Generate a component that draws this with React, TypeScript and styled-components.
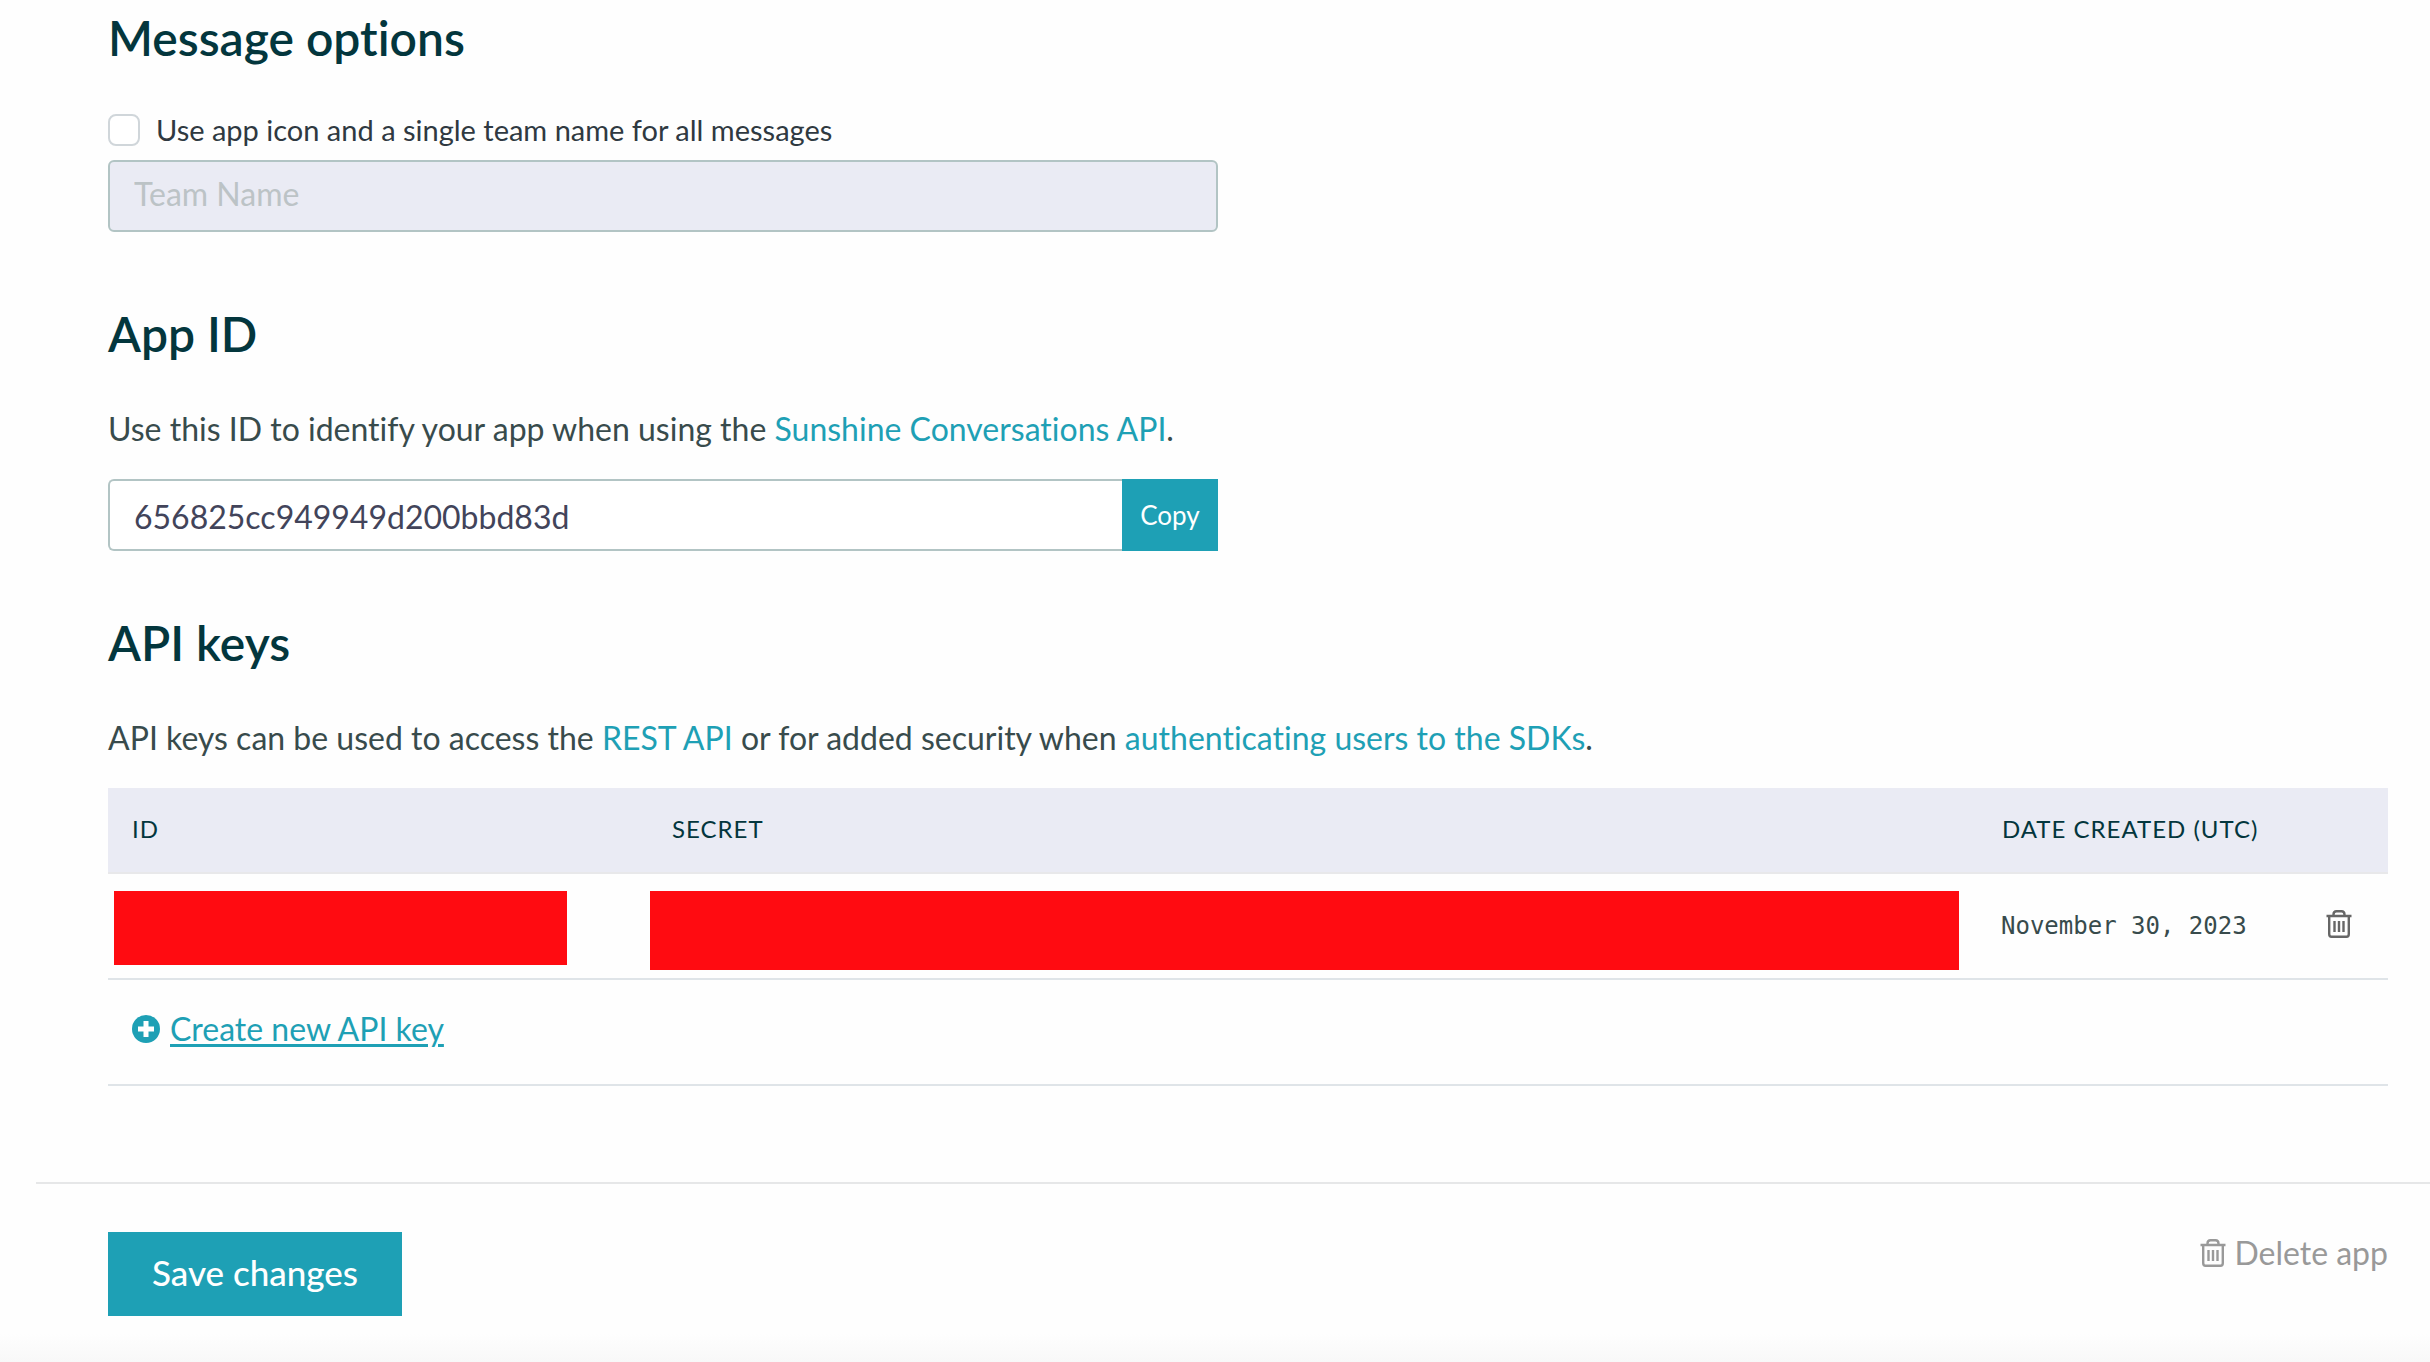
import React from 'react';
import styled, { createGlobalStyle } from 'styled-components';

const ink = '#03363d';
const body = '#384b4c';
const teal = '#1ea0b5';
const panel = '#eaebf4';
const outline = '#b2c4c4';
const rule = '#dfe4e8';
const redaction = '#ff0b11';
const sans = "Lato, 'Open Sans', sans-serif";

const GlobalStyle = createGlobalStyle`
  *, *::before, *::after { box-sizing: border-box; }
  body {
    margin: 0;
    background: #fefefe;
    color: ${body};
    font: 400 32px/42px ${sans};
    font-variant-ligatures: none;
  }
  button, input { font: inherit; }
`;

const Page = styled.div`
  display: flex;
  flex-direction: column;
  min-height: 100vh;
`;

const Settings = styled.main`
  padding: 6px 42px 96px 108px;
`;

const Section = styled.section<{ $top?: number }>`
  margin-top: ${p => p.$top ?? 0}px;
`;

const Heading = styled.h2`
  margin: 0 0 42px;
  color: ${ink};
  font-size: 48px;
  line-height: 64px;
  font-weight: 600;
`;

const CheckLabel = styled.label`
  display: flex;
  align-items: center;
  gap: 16px;
  margin-bottom: 12px;
  color: #2f3941;
  font-size: 29px;
  line-height: 36px;
`;

const CheckBox = styled.input`
  appearance: none;
  width: 32px;
  height: 32px;
  margin: 0;
  border: 2px solid #d0d6da;
  border-radius: 8px;
  background: #fff;
`;

const Field = styled.div`
  display: flex;
  width: 1110px;
  max-width: 100%;
`;

const TextBox = styled.input`
  flex: 1;
  min-width: 0;
  height: 72px;
  padding: 0 24px 6px;
  border: 2px solid ${outline};
  border-radius: 6px;
  background: #fff;
  color: #42445a;
  &:disabled { background: ${panel}; }
  &::placeholder { color: #bcc3c6; opacity: 1; }
`;

const IdBox = styled(TextBox)`
  padding: 2px 24px 0;
  border-right: 0;
  border-radius: 6px 0 0 6px;
`;

const CopyButton = styled.button`
  width: 96px;
  border: 0;
  padding: 0;
  background: ${teal};
  color: #fff;
  font-size: 26px;
`;

const Text = styled.p`
  margin: 0 0 29px;
`;

const Link = styled.a`
  color: ${teal};
  text-decoration: none;
`;

const Table = styled.table`
  width: 100%;
  table-layout: fixed;
  border-collapse: separate;
  border-spacing: 0;
`;

const IdCol = styled.col` width: 540px; `;
const DateCol = styled.col` width: 324px; `;
const ActionCol = styled.col` width: 86px; `;

const HeadCell = styled.th`
  height: 86px;
  padding: 0 24px 2px;
  border-bottom: 2px solid #e8e8ea;
  background: ${panel};
  color: ${ink};
  font-size: 24px;
  line-height: 32px;
  font-weight: 400;
  letter-spacing: 1px;
  text-align: left;
  text-transform: uppercase;
  white-space: nowrap;
`;

const Cell = styled.td`
  height: 106px;
  padding: 0 24px 4px;
  border-bottom: 2px solid ${rule};
`;

const HiddenCell = styled(Cell)<{ $inset: number }>`
  padding: 17px 2px 8px ${p => p.$inset}px;
  vertical-align: top;
`;

const DateCell = styled(Cell)`
  padding: 0 0 0 23px;
  font: 400 24px/32px 'DejaVu Sans Mono', monospace;
  white-space: nowrap;
`;

const Redacted = styled.div<{ $height: number; $gap: number }>`
  height: ${p => p.$height}px;
  margin-right: ${p => p.$gap}px;
  background: ${redaction};
`;

const IconButton = styled.button`
  display: flex;
  padding: 0;
  border: 0;
  background: none;
  color: #666;
`;

const CreateLink = styled(Link)`
  display: inline-flex;
  align-items: center;
  gap: 10px;
`;

const Underlined = styled.span`
  text-decoration: underline;
  text-decoration-thickness: 3px;
  text-underline-offset: 3px;
`;

const Footer = styled.footer`
  display: flex;
  flex: 1;
  align-items: flex-start;
  justify-content: space-between;
  margin-left: 36px;
  padding: 48px 42px 46px 72px;
  border-top: 2px solid #e6e7e8;
`;

const Fade = styled.div`
  height: 28px;
  margin-top: -28px;
  background: linear-gradient(#fefefe, #f8f8f8);
`;

const SaveButton = styled.button`
  height: 84px;
  padding: 0 44px 4px;
  border: 0;
  background: ${teal};
  color: #fff;
  font-size: 35px;
  font-weight: 500;
`;

const DeleteButton = styled.button`
  display: flex;
  align-items: center;
  gap: 8px;
  padding: 0;
  border: 0;
  background: none;
  color: #999;
`;

const TrashIcon = () => (
  <svg width="26" height="28" viewBox="0 0 26 28" fill="none" stroke="currentColor" strokeWidth="2.400" aria-hidden="true">
    <path d="M0.500 6h25M7.500 6V4.500Q7.500 1.200 10.500 1.200h5Q18.500 1.200 18.500 4.500V6M3.200 6v18Q3.200 26.800 5.500 26.800h15Q22.800 26.800 22.800 24V6M8.500 11v11M13 11v11M17.500 11v11" />
  </svg>
);

const PlusIcon = () => (
  <svg width="28" height="28" viewBox="0 0 28 28" aria-hidden="true">
    <circle cx="14" cy="14" r="14" fill="currentColor" />
    <path d="M14 6v16M6 14h16" stroke="#fff" strokeWidth="5" />
  </svg>
);

export default function App() {
  return (
    <Page>
      <GlobalStyle />
      <Settings>
        <Section>
          <Heading>Message options</Heading>
          <CheckLabel>
            <CheckBox type="checkbox" />
            Use app icon and a single team name for all messages
          </CheckLabel>
          <Field>
            <TextBox placeholder="Team Name" aria-label="Team name" disabled />
          </Field>
        </Section>
        <Section $top={70}>
          <Heading>App ID</Heading>
          <Text>
            Use this ID to identify your app when using the <Link href="#api">Sunshine Conversations API</Link>.
          </Text>
          <Field>
            <IdBox defaultValue="656825cc949949d200bbd83d" aria-label="App ID" readOnly />
            <CopyButton type="button">Copy</CopyButton>
          </Field>
        </Section>
        <Section $top={60}>
          <Heading>API keys</Heading>
          <Text>
            API keys can be used to access the <Link href="#rest">REST API</Link> or for added security when{' '}
            <Link href="#auth">authenticating users to the SDKs</Link>.
          </Text>
          <Table>
            <colgroup>
              <IdCol />
              <col />
              <DateCol />
              <ActionCol />
            </colgroup>
            <thead>
              <tr>
                <HeadCell>ID</HeadCell>
                <HeadCell>Secret</HeadCell>
                <HeadCell>Date created (UTC)</HeadCell>
                <HeadCell />
              </tr>
            </thead>
            <tbody>
              <tr>
                <HiddenCell $inset={6}><Redacted $height={74} $gap={79} /></HiddenCell>
                <HiddenCell $inset={2}><Redacted $height={79} $gap={17} /></HiddenCell>
                <DateCell>November 30, 2023</DateCell>
                <Cell>
                  <IconButton type="button" aria-label="Delete key"><TrashIcon /></IconButton>
                </Cell>
              </tr>
              <tr>
                <Cell colSpan={4}>
                  <CreateLink href="#create"><PlusIcon /><Underlined>Create new API key</Underlined></CreateLink>
                </Cell>
              </tr>
            </tbody>
          </Table>
        </Section>
      </Settings>
      <Footer>
        <SaveButton type="button">Save changes</SaveButton>
        <DeleteButton type="button"><TrashIcon />Delete app</DeleteButton>
      </Footer>
      <Fade />
    </Page>
  );
}
